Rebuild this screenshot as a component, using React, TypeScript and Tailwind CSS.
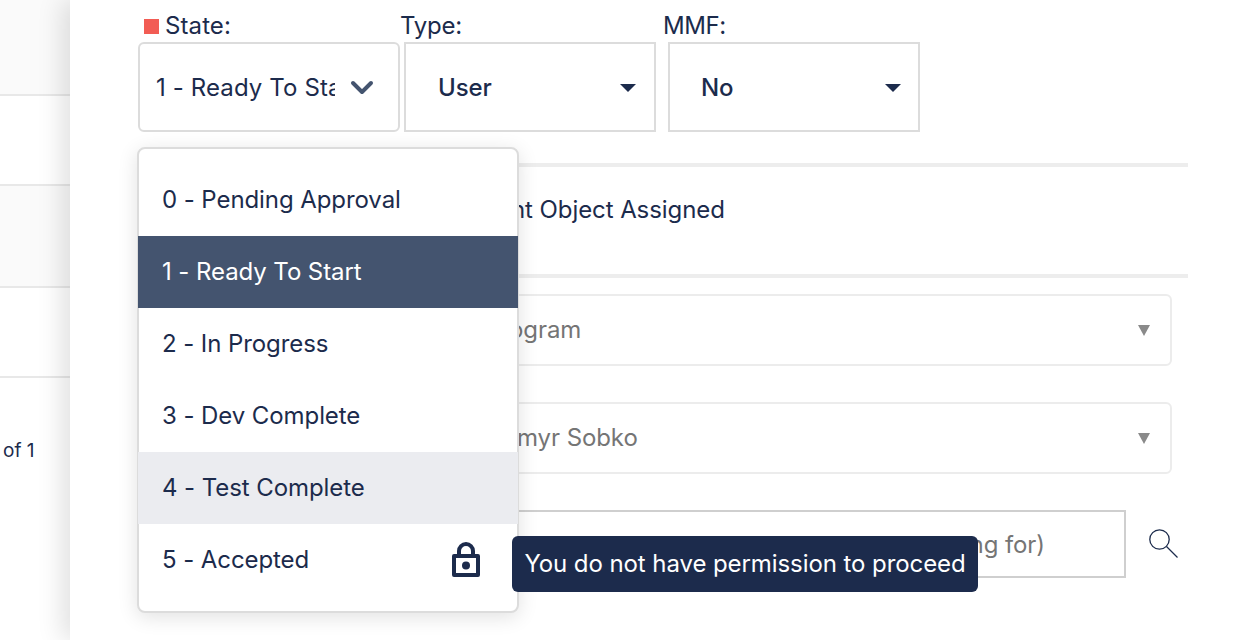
import React from "react";

const font = { fontFamily: "Inter, sans-serif" };

function Arrow() {
  return <span className="w-0 h-0 border-x-[8px] border-x-transparent border-t-[8px] border-t-[#1c2b4c]" />;
}

function GreyArrow() {
  return <span className="w-0 h-0 border-x-[6.5px] border-x-transparent border-t-[11px] border-t-[#8a8a8a]" />;
}

const items = [
  { t: "0 - Pending Approval", c: "text-[#1c2b4c]" },
  { t: "1 - Ready To Start", c: "bg-[#44546f] text-white" },
  { t: "2 - In Progress", c: "text-[#1c2b4c]" },
  { t: "3 - Dev Complete", c: "text-[#1c2b4c]" },
  { t: "4 - Test Complete", c: "bg-[#ebecf0] text-[#1c2b4c]" },
  { t: "5 - Accepted", c: "text-[#1c2b4c]", lock: true },
];

export default function App() {
  return (
    <div className="relative w-[1238px] h-[640px] overflow-hidden bg-white text-[24px] text-[#1c2b4c] tracking-[-0.08px]" style={font}>
      <div className="flex h-full">
        <div className="w-[70px] shrink-0 flex flex-col bg-white">
          <div className="h-[96px] bg-[#fafafa] border-b-2 border-[#e8e8e8]" />
          <div className="h-[90px] border-b-2 border-[#e8e8e8]" />
          <div className="h-[102px] bg-[#fafafa] border-b-2 border-[#e8e8e8]" />
          <div className="h-[90px] border-b-2 border-[#e8e8e8]" />
          <div className="pt-[60px] pl-[3px] text-[19px] leading-[26px] whitespace-nowrap tracking-normal">of 1</div>
        </div>
        <div className="flex-1 bg-white shadow-[-8px_0_24px_rgba(0,0,0,0.12)] pl-[68px] pr-[50px] relative">
          <div className="flex h-[132px]">
            <div className="w-[262px] shrink-0">
              <div className="flex items-center h-[42px] pt-[10px] pl-[6px] gap-[6px]">
                <span className="w-[15px] h-[15px] bg-[#f25c54]" />
                <span className="tracking-[0.1px]">State:</span>
              </div>
              <div className="h-[90px] border-2 border-[#dcdcdc] rounded-[6px] flex items-center pt-[2px] pl-[16px] pr-[24px] justify-between">
                <span className="w-[179px] whitespace-nowrap overflow-hidden tracking-[0.12px]">1 - Ready To Start</span>
                <svg width="24" height="16" viewBox="0 0 24 16" fill="none" stroke="#44546f" strokeWidth="4" strokeLinecap="round" strokeLinejoin="round">
                  <path d="M3 3 L12 12 L21 3" />
                </svg>
              </div>
            </div>
            <div className="w-[268px] shrink-0 pl-[4px]">
              <div className="h-[42px] flex items-center pt-[10px] -ml-[4px] tracking-[-0.2px]">Type:</div>
              <div className="h-[90px] w-[252px] border-2 border-[#dcdcdc] flex items-center justify-between pt-[2px] pl-[32px] pr-[18px] font-medium">
                <span>User</span>
                <Arrow />
              </div>
            </div>
            <div className="w-[252px] shrink-0">
              <div className="h-[42px] flex items-center pt-[10px] -ml-[5px] tracking-[-0.4px]">MMF:</div>
              <div className="h-[90px] w-[252px] border-2 border-[#dcdcdc] flex items-center justify-between pt-[2px] pl-[31px] pr-[17px] font-medium">
                <span>No</span>
                <Arrow />
              </div>
            </div>
          </div>

          <div className="mt-[31px] h-[4px] bg-[#ededed]" />
          <div className="h-[107px] pl-[373px] pt-[27px] leading-[32px] whitespace-nowrap">nt Object Assigned</div>
          <div className="h-[4px] bg-[#ededed]" />

          <div className="mt-[16px] w-[1034px] h-[72px] border-2 border-[#ececec] rounded-[6px] flex items-center justify-between pr-[20px] pl-[369px] text-[#757575]">
            <span>ogram</span>
            <GreyArrow />
          </div>
          <div className="mt-[36px] w-[1034px] h-[72px] border-2 border-[#ececec] rounded-[6px] flex items-center justify-between pr-[20px] pl-[377px] text-[#757575]">
            <span>myr Sobko</span>
            <GreyArrow />
          </div>
          <div className="mt-[36px] flex items-center">
            <div className="ml-[62px] w-[926px] h-[68px] border-2 border-[#cfcfcf] flex items-center justify-end pt-[2px] pr-[79px] text-[#757575] shrink-0">
              ng for)
            </div>
            <svg className="ml-[23px]" width="30" height="30" viewBox="0 0 30 30" fill="none" stroke="#1c2b4c" strokeWidth="1.3">
              <circle cx="10.5" cy="10.5" r="9.7" />
              <path d="M17.5 17.5 L28.5 28.5" />
            </svg>
          </div>
        </div>
      </div>

      <div className="absolute left-[137px] top-[147px] w-[382px] h-[466px] bg-white border-2 border-[#dcdcdc] rounded-[8px] shadow-[0_4px_20px_rgba(0,0,0,0.12)] py-[15px]">
        {items.map((it) => (
          <div key={it.t} className={`h-[72px] -mx-px pl-[24px] pr-[38px] flex items-center justify-between ${it.c}`}>
            <span>{it.t}</span>
            {it.lock && (
              <svg width="28" height="36" viewBox="0 0 28 36">
                <path d="M7 14 V9 a7 7 0 0 1 14 0 V14" fill="none" stroke="#1c2b4c" strokeWidth="4" />
                <path fillRule="evenodd" fill="#1c2b4c" d="M2 12 H26 a2 2 0 0 1 2 2 V33 a2 2 0 0 1 -2 2 H2 a2 2 0 0 1 -2 -2 V14 a2 2 0 0 1 2 -2 Z M4 16 V31 H24 V16 Z" />
                <circle cx="14" cy="23.5" r="4" fill="#1c2b4c" />
              </svg>
            )}
          </div>
        ))}
      </div>

      <div className="absolute left-[512px] top-[536px] h-[56px] w-[466px] bg-[#1c2b4c] text-white rounded-[6px] flex items-center justify-center whitespace-nowrap">
        You do not have permission to proceed
      </div>
    </div>
  );
}
